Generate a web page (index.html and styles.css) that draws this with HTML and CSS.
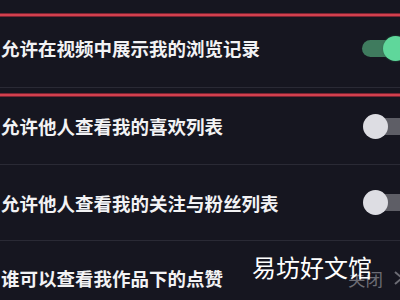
FILE: index.html
```html
<!DOCTYPE html>
<html lang="zh-CN">
<head>
<meta charset="utf-8">
<link rel="stylesheet" href="styles.css">
</head>
<body>
<div class="page">
  <div class="top-gap"></div>
  <div class="red-line"></div>
  <div class="row row1">
    <span class="label">允许在视频中展示我的浏览记录</span>
    <div class="toggle on"><div class="track"></div><div class="knob"></div></div>
  </div>
  <div class="sep"></div>
  <div class="red-line red-second"></div>
  <div class="row row2">
    <span class="label">允许他人查看我的喜欢列表</span>
    <div class="toggle off"><div class="track"></div><div class="knob"></div></div>
  </div>
  <div class="sep"></div>
  <div class="row row3">
    <span class="label">允许他人查看我的关注与粉丝列表</span>
    <div class="toggle off"><div class="track"></div><div class="knob"></div></div>
  </div>
  <div class="sep"></div>
  <div class="row row4">
    <span class="label">谁可以查看我作品下的点赞</span>
    <div class="value">
      <span class="value-text">关闭</span>
      <svg class="chev" width="12" height="16" viewBox="0 0 12 16"><path d="M2 2 L9 8 L2 14" fill="none" stroke="#6c6c74" stroke-width="2"/></svg>
    </div>
  </div>
  <div class="watermark">易坊好文馆</div>
</div>
</body>
</html>
```
FILE: styles.css
```css
html, body {
  margin: 0;
  padding: 0;
  background: #161620;
  overflow: hidden;
}
.page {
  position: relative;
  width: 400px;
  height: 300px;
  overflow: hidden;
  display: flex;
  flex-direction: column;
  font-family: "Noto Sans CJK SC", "Noto Sans", sans-serif;
}
.top-gap { height: 13px; flex-shrink: 0; }
.red-line {
  height: 2px;
  flex-shrink: 0;
  background: #d2404e;
  border-top: 1px solid #7a2432;
  border-bottom: 1px solid #7a2432;
}
.red-second { margin-top: 5px; }
.sep {
  height: 1px;
  flex-shrink: 0;
  background: #2a2a35;
}
.row {
  display: flex;
  align-items: center;
  flex-shrink: 0;
  padding-left: 1px;
  box-sizing: border-box;
}
.row1 { height: 70px; padding-bottom: 8px; }
.row2 { height: 67px; padding-bottom: 9px; }
.row3 { height: 75px; }
.row4 { height: 74px; }
.label {
  flex: 1;
  color: #f2f2f4;
  font-size: 18.5px;
  font-weight: 700;
  white-space: nowrap;
}
.toggle {
  position: relative;
  width: 48px;
  height: 25px;
  margin-right: -10px;
  flex-shrink: 0;
}
.track {
  position: absolute;
  top: 4px;
  height: 17px;
  right: 0;
  border-radius: 9px 0 0 9px;
}
.knob {
  position: absolute;
  top: 0;
  width: 25px;
  height: 25px;
  border-radius: 50%;
}
.on .track { left: 0; background: #3f7b5e; }
.on .knob { left: 21px; background: #5fd79b; box-shadow: 0 0 2px #2d6a4c; }
.off .track { left: 12px; background: #5e5e66; }
.off .knob { left: 1px; background: #dddde3; }
.value {
  display: flex;
  align-items: center;
  gap: 10px;
  margin-right: -5px;
}
.value-text {
  color: #6c6c74;
  font-size: 17.5px;
}
.watermark {
  position: absolute;
  left: 252px;
  top: 252px;
  color: #ffffff;
  font-size: 24px;
  line-height: 30px;
  white-space: nowrap;
}
```
